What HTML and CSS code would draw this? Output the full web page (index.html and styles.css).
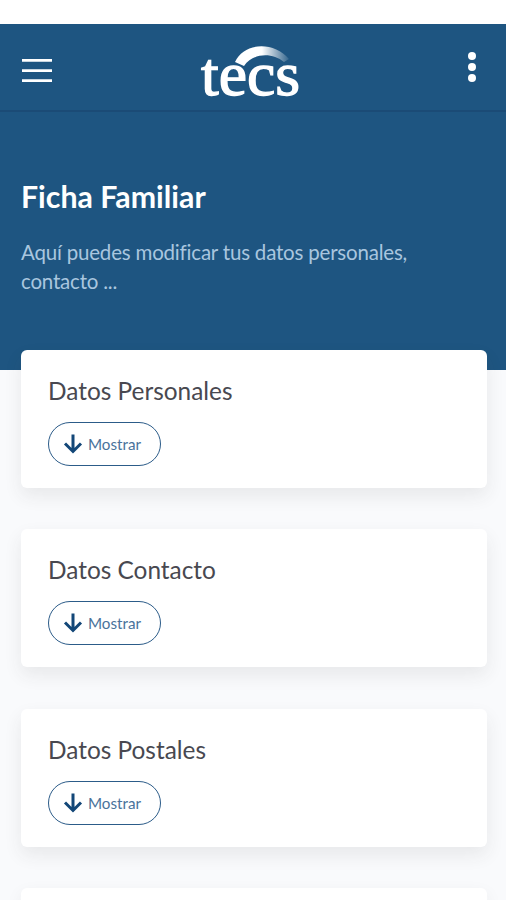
FILE: index.html
```html
<!DOCTYPE html>
<html lang="es">
<head>
<meta charset="utf-8">
<title>Ficha Familiar</title>
<link rel="stylesheet" href="styles.css">
</head>
<body>
<header class="topbar">
  <svg class="menu" width="30" height="26" viewBox="0 0 30 26"><path d="M0 2.3h30M0 12.7h30M0 22.6h30" stroke="#fff" stroke-width="2.8"/></svg>
  <svg class="logo" width="110" height="70" viewBox="0 0 110 70">
    <defs><linearGradient id="arc" x1="0" x2="1"><stop offset=".5" stop-color="#fff"/><stop offset="1" stop-color="#fff" stop-opacity=".1"/></linearGradient></defs>
    <text class="wordmark" x="6" y="53" textLength="99" lengthAdjust="spacingAndGlyphs">tecs</text>
    <path d="M40 20C49 0 79-1 94 17L89 20C77 10 58 11 49 24Z" fill="url(#arc)"/>
  </svg>
  <svg class="more" width="10" height="32" viewBox="0 0 10 32"><g fill="#fff"><circle cx="5" cy="5" r="4"/><circle cx="5" cy="16" r="4"/><circle cx="5" cy="27" r="4"/></g></svg>
</header>
<section class="hero">
  <h1>Ficha Familiar</h1>
  <p>Aquí puedes modificar tus datos personales, contacto ...</p>
</section>
<main class="cards">
  <article class="card">
    <h2>Datos Personales</h2>
    <button class="show"><svg width="20" height="20" viewBox="0 0 20 20"><path d="M10 .5V17M2 9.5l8 8 8-8"/></svg><span>Mostrar</span></button>
  </article>
  <article class="card">
    <h2>Datos Contacto</h2>
    <button class="show"><svg width="20" height="20" viewBox="0 0 20 20"><path d="M10 .5V17M2 9.5l8 8 8-8"/></svg><span>Mostrar</span></button>
  </article>
  <article class="card">
    <h2>Datos Postales</h2>
    <button class="show"><svg width="20" height="20" viewBox="0 0 20 20"><path d="M10 .5V17M2 9.5l8 8 8-8"/></svg><span>Mostrar</span></button>
  </article>
  <article class="card card-next"></article>
</main>
</body>
</html>
```
FILE: styles.css
```css
* { box-sizing: border-box; }
html { background: #fff; }
body {
  margin: 0;
  padding-top: 23.5px;
  height: 900px;
  overflow: hidden;
  font-family: Lato, sans-serif;
  background: linear-gradient(#fff 0 24px, #f9fafc 24px);
}
.topbar {
  height: 88.5px;
  padding: 0 29px 0 22px;
  display: flex;
  align-items: flex-start;
  background: #1e5581;
  border-bottom: 2px solid #1b4b76;
}
.menu { margin-top: 34.5px; }
.logo { margin: 18.5px 0 0 143px; overflow: visible; }
.wordmark { font: 400 62px "Liberation Serif", serif; fill: #fff; stroke: #fff; stroke-width: 1.3px; }
.more { margin: 27.5px 0 0 auto; }
.hero {
  height: 258px;
  padding: 66px 21px 0;
  background: #1e5581;
  color: #fff;
}
h1 { margin: 0; font-size: 30.3px; line-height: 36px; font-weight: 700; }
.hero p { margin: 24px 0 0; font-size: 20.5px; line-height: 28.5px; letter-spacing: -.2px; font-variant-ligatures: common-ligatures; color: #a9c6df; }
.cards {
  margin: -20px 19px 0 21px;
  display: flex;
  flex-direction: column;
  gap: 41.3px;
}
.card {
  height: 138px;
  flex: none;
  padding: 25px 27px;
  border-radius: 6px;
  background: #fff;
  box-shadow: 0 8px 18px rgba(50, 60, 60, .09);
}
.card-next { height: 12.1px; padding: 0; border-radius: 6px 6px 0 0; }
h2 { margin: 0; font-size: 24.4px; line-height: 32px; font-weight: 400; color: #484850; }
.show {
  display: flex;
  align-items: center;
  gap: 5px;
  width: 113px;
  height: 44px;
  margin: 15px 0 0;
  padding: 0 14px;
  border: 1.4px solid #2c5c89;
  border-radius: 22px;
  background: #fff;
  color: #49739b;
  font: 400 15.2px Lato, sans-serif;
}
.show svg { fill: none; stroke: #134778; stroke-width: 3; flex: none; }
```
